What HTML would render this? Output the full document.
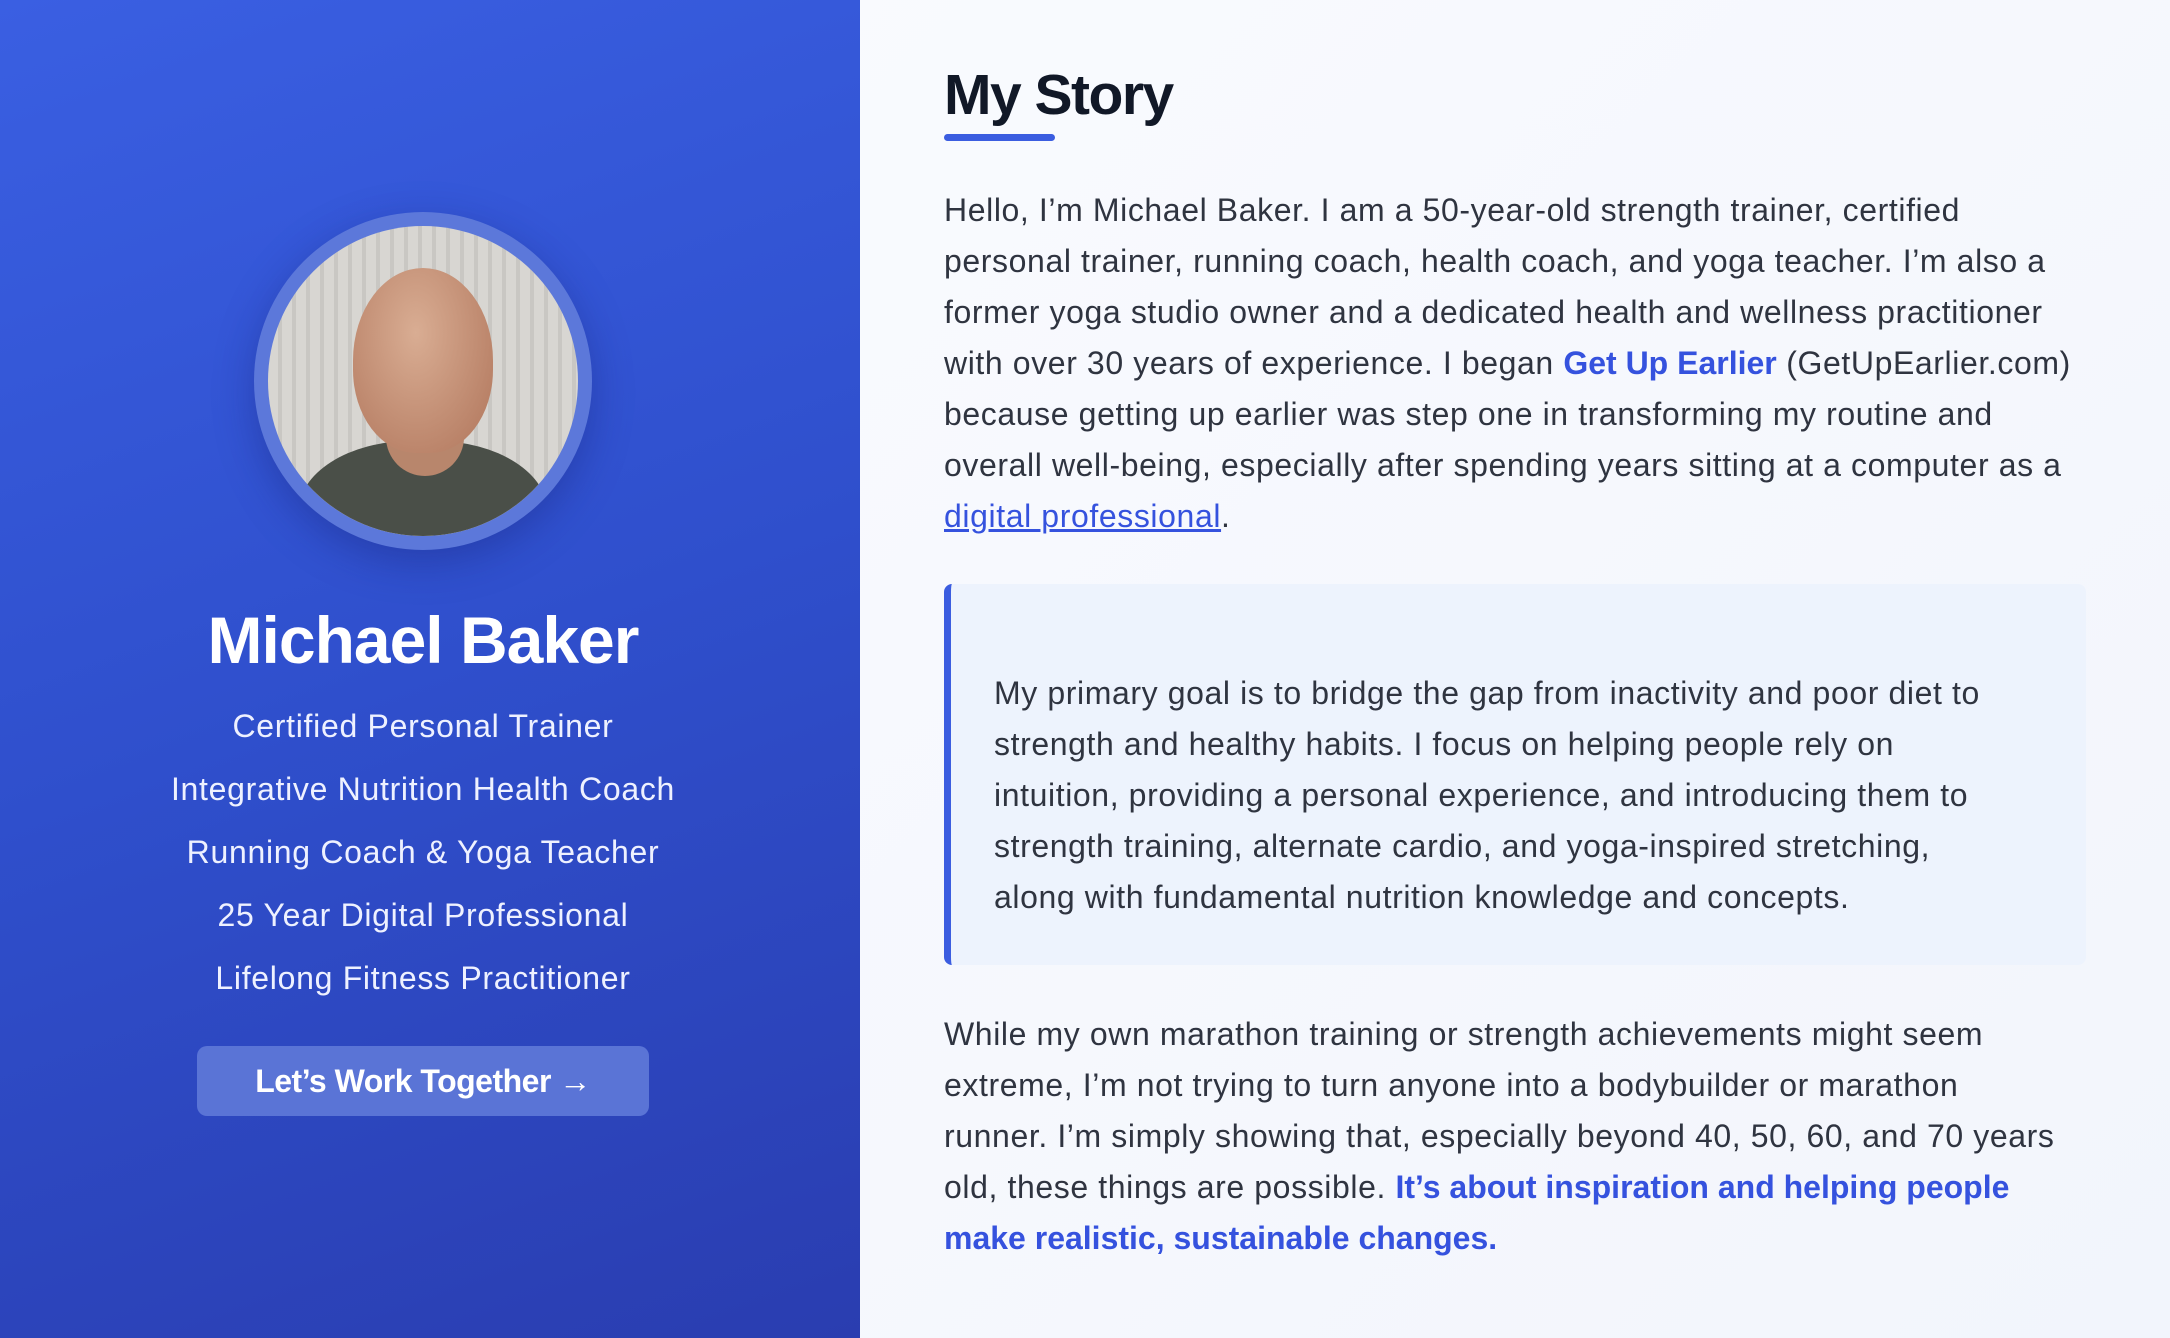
<!DOCTYPE html>
<html><head><meta charset="utf-8"><style>
*{margin:0;padding:0;box-sizing:border-box}
body{width:2170px;height:1338px;overflow:hidden;font-family:"Liberation Sans",sans-serif;background:linear-gradient(135deg,#fbfcff,#f2f5fc)}
.left{position:absolute;left:0;top:0;width:860px;height:1338px;background:linear-gradient(160deg,#3a5fe2 0%,#2f4fcc 50%,#2a3db0 100%);color:#fff;text-align:center}
.av{position:absolute;left:254px;top:212px;width:338px;height:338px;border-radius:50%;background:#5c78da;box-shadow:0 12px 40px rgba(20,30,110,.35)}
.ph{position:absolute;left:14px;top:14px;width:310px;height:310px;border-radius:50%;overflow:hidden;background:repeating-linear-gradient(90deg,#d8d6d2 0 10px,#c9c7c3 10px 14px)}
.name{position:absolute;left:0;width:846px;top:602px;font-size:66px;font-weight:bold;letter-spacing:-1px}
.sub{position:absolute;left:0;width:846px;font-size:32px;letter-spacing:.7px;color:#eef1ff}
.btn{position:absolute;left:197px;top:1046px;width:452px;height:70px;border-radius:10px;background:#5a74d6;font-size:32px;font-weight:bold;line-height:70px;letter-spacing:-.5px}
.right{position:absolute;left:944px;top:0;width:1150px;color:#2f3440}
h1{position:absolute;top:62px;font-size:57px;color:#111827;font-weight:bold;letter-spacing:-1.5px}
.ul{position:absolute;top:134px;left:0;width:111px;height:7px;border-radius:4px;background:#3b5de0}
p{position:absolute;font-size:32px;line-height:51px;white-space:nowrap;letter-spacing:.6px}
a{color:#3552de;text-decoration:none}
.b{font-weight:bold;letter-spacing:0}
.q{position:absolute;top:584px;left:0;width:1142px;height:381px;background:#edf3fd;border-left:7px solid #3b5de0;border-radius:8px}
</style></head><body>
<div class="left">
 <div class="av"><div class="ph">
  <div style="position:absolute;left:40px;top:215px;width:240px;height:140px;border-radius:50%;background:#e0ddd8"></div>
  <div style="position:absolute;left:30px;top:215px;width:250px;height:160px;border-radius:45% 45% 0 0;background:#4a4f48"></div>
  <div style="position:absolute;left:118px;top:180px;width:78px;height:70px;background:#b8866c;border-radius:0 0 40px 40px"></div>
  <div style="position:absolute;left:85px;top:42px;width:140px;height:185px;border-radius:50% 50% 45% 45%;background:radial-gradient(ellipse at 45% 35%,#d9ad93,#b88066 80%)"></div>
 </div></div>
 <div class="name">Michael Baker</div>
 <div class="sub" style="top:708px">Certified Personal Trainer</div>
 <div class="sub" style="top:771px">Integrative Nutrition Health Coach</div>
 <div class="sub" style="top:834px">Running Coach &amp; Yoga Teacher</div>
 <div class="sub" style="top:897px">25 Year Digital Professional</div>
 <div class="sub" style="top:960px">Lifelong Fitness Practitioner</div>
 <div class="btn">Let’s Work Together →</div>
</div>
<div class="right">
 <h1>My Story</h1><div class="ul"></div>
 <p style="top:185px;left:0">Hello, I’m Michael Baker. I am a 50-year-old strength trainer, certified<br>personal trainer, running coach, health coach, and yoga teacher. I’m also a<br>former yoga studio owner and a dedicated health and wellness practitioner<br>with over 30 years of experience. I began <a class="b">Get Up Earlier</a> (GetUpEarlier.com)<br>because getting up earlier was step one in transforming my routine and<br>overall well-being, especially after spending years sitting at a computer as a<br><a style="text-decoration:underline">digital professional</a>.</p>
 <div class="q"></div>
 <p style="top:668px;left:50px">My primary goal is to bridge the gap from inactivity and poor diet to<br>strength and healthy habits. I focus on helping people rely on<br>intuition, providing a personal experience, and introducing them to<br>strength training, alternate cardio, and yoga-inspired stretching,<br>along with fundamental nutrition knowledge and concepts.</p>
 <p style="top:1009px;left:0">While my own marathon training or strength achievements might seem<br>extreme, I’m not trying to turn anyone into a bodybuilder or marathon<br>runner. I’m simply showing that, especially beyond 40, 50, 60, and 70 years<br>old, these things are possible. <a class="b">It’s about inspiration and helping people<br>make realistic, sustainable changes.</a></p>
</div>
</body></html>
